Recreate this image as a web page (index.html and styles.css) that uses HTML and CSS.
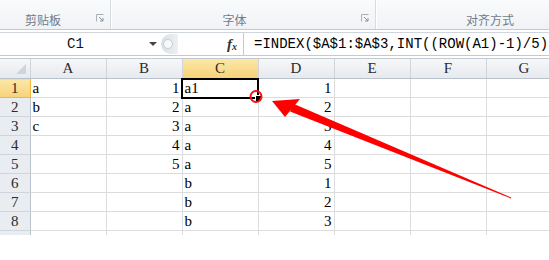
FILE: index.html
```html
<!DOCTYPE html>
<html lang="zh-CN">
<head>
  <meta charset="UTF-8">
  <meta name="viewport" content="width=device-width, initial-scale=1.0">
  <title>INDEX 公式</title>
  <link rel="stylesheet" href="styles.css">
</head>
<body>

<div class="ribbon">
  <div class="group group-clip">
    <span class="group-label">剪贴板</span>
    <svg class="launcher" width="8" height="8" viewBox="0 0 8 8"><path d="M0.5 7.5V0.5H7.5" fill="none" stroke="#a9b0b9"/><path d="M3 3L7 7M4 7H7V4" fill="none" stroke="#8a929c"/></svg>
  </div>
  <div class="group group-font">
    <span class="group-label">字体</span>
    <svg class="launcher" width="8" height="8" viewBox="0 0 8 8"><path d="M0.5 7.5V0.5H7.5" fill="none" stroke="#a9b0b9"/><path d="M3 3L7 7M4 7H7V4" fill="none" stroke="#8a929c"/></svg>
  </div>
  <div class="group group-align">
    <span class="group-label">对齐方式</span>
  </div>
</div>

<div class="formula-bar">
  <div class="name-box">
    <span class="name-text">C1</span>
    <span class="name-arrow"></span>
  </div>
  <div class="splitter"><span class="knob"></span></div>
  <div class="fx"><i>f</i><i class="x">x</i></div>
  <div class="formula">=INDEX($A$1:$A$3,INT((ROW(A1)-1)/5)</div>
</div>

<div class="sheet">
  <table class="grid">
    <colgroup>
      <col class="c-row"><col class="c-col"><col class="c-col"><col class="c-col"><col class="c-col"><col class="c-col"><col class="c-col"><col class="c-col">
    </colgroup>
    <thead>
      <tr>
        <th class="corner"><span class="corner-mark"></span></th>
        <th>A</th><th>B</th><th class="active">C</th><th>D</th><th>E</th><th>F</th><th>G</th>
      </tr>
    </thead>
    <tbody>
      <tr><th class="active">1</th><td>a</td><td class="num">1</td><td>a1</td><td class="num">1</td><td></td><td></td><td></td></tr>
      <tr><th>2</th><td>b</td><td class="num">2</td><td>a</td><td class="num">2</td><td></td><td></td><td></td></tr>
      <tr><th>3</th><td>c</td><td class="num">3</td><td>a</td><td class="num">3</td><td></td><td></td><td></td></tr>
      <tr><th>4</th><td></td><td class="num">4</td><td>a</td><td class="num">4</td><td></td><td></td><td></td></tr>
      <tr><th>5</th><td></td><td class="num">5</td><td>a</td><td class="num">5</td><td></td><td></td><td></td></tr>
      <tr><th>6</th><td></td><td></td><td>b</td><td class="num">1</td><td></td><td></td><td></td></tr>
      <tr><th>7</th><td></td><td></td><td>b</td><td class="num">2</td><td></td><td></td><td></td></tr>
      <tr><th>8</th><td></td><td></td><td>b</td><td class="num">3</td><td></td><td></td><td></td></tr>
      <tr><th></th><td></td><td></td><td></td><td></td><td></td><td></td><td></td></tr>
    </tbody>
  </table>

  <div class="selection"><span class="fill-handle"></span></div>
</div>

<!-- annotation drawn over the sheet -->
<svg class="annotation" width="549" height="260" viewBox="0 0 549 260">
  <circle cx="256" cy="96.5" r="5.5" fill="none" stroke="#ff1010" stroke-width="2"/>
  <polygon points="272,101 300,99 285,117" fill="#ff0000"/>
  <polygon points="290,111.5 294,104 511.3,197.6 510.8,198.4" fill="#ff0000"/>
</svg>

</body>
</html>
```

FILE: styles.css
```css
body {
  margin: 0;
  width: 549px;
  height: 260px;
  position: relative;
  overflow: hidden;
  background: #fff;
  font-family: "Liberation Serif", serif;
}

/* ribbon group labels */
.ribbon {
  display: flex;
  height: 29px;
  background: linear-gradient(#fafbfc, #f0f2f5);
  border-bottom: 1px solid #c3c9d1;
  overflow: hidden;
}
.group {
  position: relative;
  display: flex;
  align-items: center;
  height: 29px;
  border-right: 1px solid #d6dbe1;
  box-shadow: 1px 0 0 #fff;
}
.group-clip {
  width: 111px;
  padding-left: 25px;
  box-sizing: border-box;
}
.group-font {
  width: 265px;
  justify-content: center;
  padding-right: 17px;
  box-sizing: border-box;
}
.group-align {
  flex: 1;
  padding-left: 90px;
  border-right: none;
  box-shadow: none;
}
.group-label {
  font-family: "Noto Sans CJK SC", sans-serif;
  font-size: 12px;
  color: #6f7b8b;
  padding-top: 10px;
}
.launcher {
  position: absolute;
  right: 6px;
  top: 14px;
}

/* formula bar */
.formula-bar {
  display: flex;
  height: 22px;
  margin-top: 2px;
  border-top: 1px solid #d0d5dc;
  border-bottom: 1px solid #c3c9d1;
  background: #fff;
  margin-bottom: 2px;
}
.name-box {
  width: 161px;
  display: flex;
  align-items: center;
  position: relative;
}
.name-text {
  flex: 1;
  text-align: center;
  font-family: "Liberation Mono", monospace;
  font-size: 14px;
  color: #111;
  padding-left: 2px;
}
.name-arrow {
  width: 0;
  height: 0;
  border-left: 4px solid transparent;
  border-right: 4px solid transparent;
  border-top: 4px solid #444;
  margin-right: 4px;
}
.splitter {
  width: 17px;
  height: 20px;
  margin-top: 1px;
  border-radius: 10px 0 0 10px;
  background: linear-gradient(90deg, #d9dde2, #eef0f3);
  display: flex;
  align-items: center;
  padding-left: 2px;
  box-sizing: border-box;
}
.knob {
  width: 8px;
  height: 8px;
  border-radius: 50%;
  background: #f7f8fa;
  border: 1px solid #c8cdd3;
}
.fx {
  width: 65px;
  display: flex;
  justify-content: flex-end;
  align-items: center;
  padding-right: 6px;
  box-sizing: border-box;
  font-weight: bold;
  color: #333;
  font-size: 15px;
}
.fx .x {
  font-size: 10px;
  margin-top: 4px;
}
.formula {
  flex: 1;
  border-left: 1px solid #c3c9d1;
  padding-left: 10px;
  font-family: "Liberation Mono", monospace;
  font-size: 14px;
  line-height: 22px;
  color: #000;
  white-space: nowrap;
  overflow: hidden;
}

/* worksheet */
.sheet {
  position: relative;
  height: 176px;
  overflow: hidden;
  border-top: 1px solid #c3c9d1;
}
.grid {
  border-collapse: collapse;
  table-layout: fixed;
  width: 560px;
  font-size: 15px;
  background: #fff;
}
.c-row { width: 30px; }
.c-col { width: 76px; }
.grid th {
  font-weight: normal;
  color: #2b2b2b;
  background: linear-gradient(#f6f7f9, #e6e9ee);
  padding: 0;
  text-align: center;
}
.grid thead th {
  height: 19px;
  border-right: 1px solid #d0d5dc;
  border-bottom: 1px solid #b9c1cb;
}
.grid tbody th {
  height: 18px;
  background: #e9ecf0;
  border-right: 1px solid #b9c1cb;
  border-bottom: 1px solid #d0d5dc;
}
.grid th.active {
  background: linear-gradient(#fbe7a6, #f7d27a);
  border-bottom-color: #f2b540;
}
.grid tbody th.active {
  border-right-color: #f2b540;
}
.grid td {
  height: 18px;
  padding: 0 2px;
  border-right: 1px solid #dadcdd;
  border-bottom: 1px solid #dadcdd;
  color: #000;
  line-height: 18px;
  white-space: nowrap;
}
.grid td.num {
  text-align: right;
}
.corner {
  position: relative;
}
.corner-mark {
  position: absolute;
  right: 4px;
  bottom: 4px;
  width: 0;
  height: 0;
  border-left: 10px solid transparent;
  border-bottom: 10px solid #d0d5db;
}

/* active cell outline over C1 */
.selection {
  position: absolute;
  left: 181px;
  top: 19px;
  width: 74px;
  height: 17px;
  border: 2px solid #000;
  pointer-events: none;
}
.fill-handle {
  position: absolute;
  right: -5px;
  bottom: -5px;
  width: 5px;
  height: 5px;
  background: #000;
  border: 1px solid #fff;
}

.annotation {
  position: absolute;
  left: 0;
  top: 0;
  pointer-events: none;
}
```
